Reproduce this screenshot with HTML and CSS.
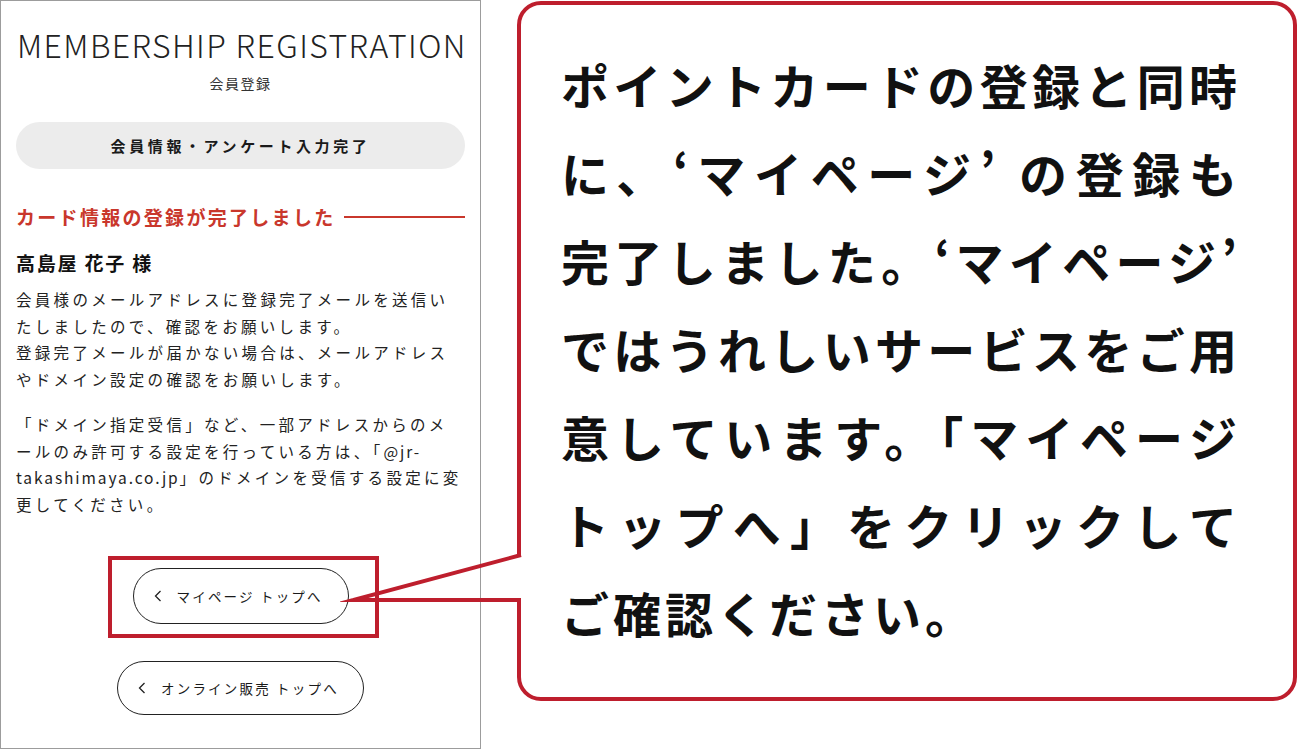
FILE: index.html
```html
<!DOCTYPE html>
<html lang="ja">
<head>
<meta charset="utf-8">
<title>Membership Registration</title>
<link rel="stylesheet" href="styles.css">
</head>
<body>
<section class="panel">
  <h1 class="title">MEMBERSHIP REGISTRATION</h1>
  <p class="subtitle">会員登録</p>
  <div class="step">会員情報・アンケート入力完了</div>
  <h2 class="heading"><span class="heading-text">カード情報の登録が完了しました</span><span class="heading-line"></span></h2>
  <p class="name">高島屋 花子 様</p>
  <p class="body">会員様のメールアドレスに登録完了メールを送信い<br>たしましたので、確認をお願いします。<br>登録完了メールが届かない場合は、メールアドレス<br>やドメイン設定の確認をお願いします。</p>
  <p class="body body-second">「ドメイン指定受信」など、一部アドレスからのメ<br>ールのみ許可する設定を行っている方は、「<span class="latin">@jr-</span><br><span class="latin">takashimaya.co.jp</span>」のドメインを受信する設定に変<br>更してください。</p>
  <div class="actions">
    <div class="highlight">
      <a class="btn btn-mypage" href="#"><svg class="chev" viewBox="0 0 8 12" width="8" height="12"><polyline points="6.5,1 1.5,6 6.5,11"/></svg><span>マイページ トップへ</span></a>
    </div>
    <a class="btn btn-online" href="#"><svg class="chev" viewBox="0 0 8 12" width="8" height="12"><polyline points="6.5,1 1.5,6 6.5,11"/></svg><span>オンライン販売 トップへ</span></a>
  </div>
</section>
<section class="callout">
  <p class="callout-text">
    <span class="cl cl-just">ポイントカードの登録と同時</span>
    <span class="cl cl-just">に、‘マイページ’ の登録も</span>
    <span class="cl cl-just">完了しました。‘マイページ’</span>
    <span class="cl cl-just">ではうれしいサービスをご用</span>
    <span class="cl cl-just">意しています。「マイページ</span>
    <span class="cl cl-just">トップへ」をクリックして</span>
    <span class="cl">ご確認ください。</span>
  </p>
</section>
<svg class="pointer" viewBox="0 0 190 70" width="190" height="70">
  <rect x="176" y="17" width="7" height="41" fill="#ffffff"/>
  <polyline points="181,15 13,60 181,60" fill="none" stroke="#be1e2d" stroke-width="4" stroke-linejoin="miter" stroke-miterlimit="20"/>
</svg>
</body>
</html>
```

FILE: styles.css
```css
* { box-sizing: border-box; }
html, body { margin: 0; padding: 0; background: #ffffff; }
body {
  position: relative;
  width: 1300px;
  height: 749px;
  overflow: hidden;
  display: flex;
  align-items: flex-start;
  font-family: "Noto Sans CJK JP", "Noto Sans", sans-serif;
  color: #1a1a1a;
}
.panel {
  width: 481px;
  height: 749px;
  border: 1px solid #9c9c9c;
  padding: 23px 15px 0 15px;
  display: flex;
  flex-direction: column;
}
.title {
  margin: 0 0 0 1px;
  font-size: 32px;
  font-weight: 300;
  line-height: 40px;
  letter-spacing: 1.4px;
  text-align: center;
  color: #222;
  white-space: nowrap;
}
.subtitle {
  margin: 9px 0 0;
  font-size: 14px;
  line-height: 20px;
  letter-spacing: 1.5px;
  text-align: center;
  color: #333;
}
.step {
  margin-top: 29px;
  height: 47px;
  border-radius: 24px;
  background: #ececec;
  display: flex;
  align-items: center;
  justify-content: center;
  font-size: 15px;
  font-weight: 700;
  letter-spacing: 3.6px;
  color: #1a1a1a;
}
.heading {
  margin: 35px 0 0;
  display: flex;
  align-items: center;
  gap: 8px;
  line-height: 26px;
}
.heading-text {
  font-size: 19px;
  font-weight: 700;
  letter-spacing: 2.3px;
  color: #c9372c;
  white-space: nowrap;
}
.heading-line {
  flex: 1;
  height: 1.5px;
  background: #c9372c;
}
.name {
  margin: 20px 0 0;
  font-size: 19px;
  font-weight: 700;
  line-height: 26px;
  letter-spacing: 1.8px;
  color: #111;
}
.body {
  margin: 10px 0 0;
  font-size: 15.5px;
  line-height: 26.7px;
  letter-spacing: 3.3px;
  color: #222;
  white-space: nowrap;
}
.body-second { margin-top: 18px; }
.latin { letter-spacing: 1.9px; }
.actions {
  margin-top: 38px;
  display: flex;
  flex-direction: column;
  align-items: center;
}
.highlight {
  margin-left: 5px;
  border: 4px solid #be1e2d;
  padding: 8px 26px 10px 21px;
}
.btn {
  display: flex;
  align-items: center;
  gap: 15px;
  height: 56px;
  padding-left: 20px;
  border: 1.5px solid #222;
  border-radius: 28px;
  text-decoration: none;
  color: #1a1a1a;
  font-size: 13.5px;
  letter-spacing: 2.2px;
  white-space: nowrap;
}
.btn-mypage { width: 216px; }
.btn-online { width: 247px; height: 54px; margin-top: 23px; }
.chev { flex: none; }
.chev polyline { fill: none; stroke: #222; stroke-width: 1.3; }
.callout {
  margin: 1px 0 0 36px;
  width: 780px;
  height: 700px;
  border: 4px solid #be1e2d;
  border-radius: 24px;
  padding: 35px 0 0 40px;
}
.callout-text {
  margin: 0;
  width: 680px;
  font-size: 48px;
  font-weight: 700;
  line-height: 88px;
  letter-spacing: 4px;
  color: #111;
  white-space: nowrap;
}
.cl { display: block; }
.cl-just { text-align: justify; text-align-last: justify; }
.pointer {
  position: absolute;
  left: 340px;
  top: 540px;
}
```
